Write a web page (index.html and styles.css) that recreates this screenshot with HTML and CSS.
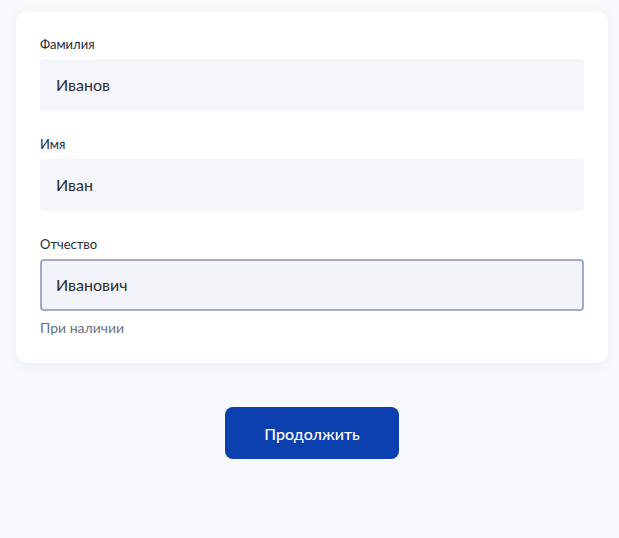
FILE: index.html
```html
<!DOCTYPE html>
<html lang="ru">
<head>
<meta charset="utf-8">
<link rel="stylesheet" href="styles.css">
</head>
<body>
<main class="page">
  <form class="card">
    <div class="field">
      <label class="label" for="f1">Фамилия</label>
      <input class="input" id="f1" type="text" value="Иванов">
    </div>
    <div class="field">
      <label class="label" for="f2">Имя</label>
      <input class="input" id="f2" type="text" value="Иван">
    </div>
    <div class="field">
      <label class="label" for="f3">Отчество</label>
      <input class="input input-focus" id="f3" type="text" value="Иванович">
      <div class="hint">При наличии</div>
    </div>
  </form>
  <div class="actions">
    <button class="btn" type="button">Продолжить</button>
  </div>
</main>
</body>
</html>
```
FILE: styles.css
```css
html, body {
  margin: 0;
  padding: 0;
  background: #f7f9fc;
  font-family: Lato, "Noto Sans", sans-serif;
}
.page {
  padding: 11px 11px 0 16px;
}
.card {
  background: #ffffff;
  border-radius: 12px;
  box-shadow: 0 2px 12px rgba(120, 140, 180, 0.10);
  padding: 24px 24px 25px 24px;
  display: flex;
  flex-direction: column;
  gap: 24px;
  width: 544px;
}
.field {
  display: flex;
  flex-direction: column;
}
.label {
  font-size: 13px;
  line-height: 19px;
  color: #1f2a3a;
  margin-bottom: 5px;
}
.input {
  box-sizing: border-box;
  height: 52px;
  width: 100%;
  border: 2px solid transparent;
  border-radius: 4px;
  background: #f5f6f9;
  padding: 0 14px 2px 14px;
  font-family: Lato, "Noto Sans", sans-serif;
  font-size: 16px;
  color: #2a2d33;
  outline: none;
}
.input-focus {
  border-color: #9eaccb;
  background: #f2f4f9;
}
.hint {
  margin-top: 7px;
  font-size: 14px;
  line-height: 20px;
  color: #66727f;
}
.actions {
  display: flex;
  justify-content: center;
  width: 592px;
  margin-top: 44px;
}
.btn {
  width: 174px;
  height: 52px;
  border: none;
  border-radius: 8px;
  background: #0c3fae;
  color: #ffffff;
  font-family: Lato, "Noto Sans", sans-serif;
  font-size: 16px;
  font-weight: 500;
  cursor: pointer;
}
```
